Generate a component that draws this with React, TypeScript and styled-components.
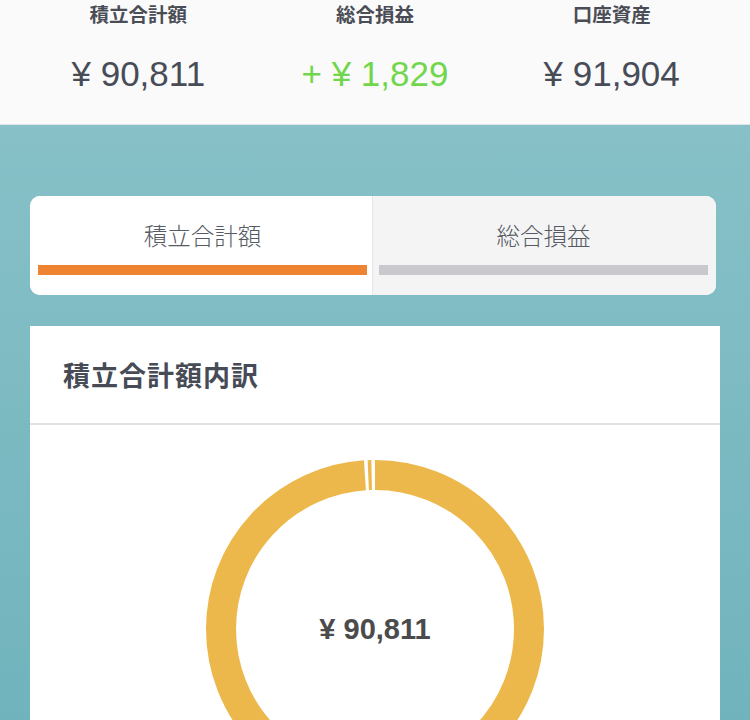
import React from 'react';
import styled, { createGlobalStyle } from 'styled-components';

const GlobalStyle = createGlobalStyle`
  body {
    margin: 0;
    font-family: "Liberation Sans", "Noto Sans CJK JP", sans-serif;
  }
`;

const Page = styled.div`
  min-height: 720px;
  display: flex;
  flex-direction: column;
  background: linear-gradient(180deg, #8cc3ca 0%, #6eb2bb 100%);
`;

const Summary = styled.div`
  background: #fafafa;
  border-bottom: 1px solid #dfe6e8;
  height: 125px;
  padding: 0 20px;
  display: grid;
  grid-template-columns: repeat(3, 1fr);
  box-sizing: border-box;
`;

const SummaryItem = styled.div`
  display: flex;
  flex-direction: column;
  align-items: center;
`;

const SummaryLabel = styled.div`
  font-family: "Noto Sans CJK JP", sans-serif;
  font-size: 19.5px;
  font-weight: 700;
  color: #4a4d55;
  line-height: 20px;
  margin-top: 4px;
`;

const SummaryValue = styled.div<{ $positive?: boolean }>`
  font-family: "Liberation Sans", "Noto Sans CJK JP", sans-serif;
  font-size: 35px;
  color: ${(p) => (p.$positive ? '#72d64c' : '#474c57')};
  margin-top: 30px;
  line-height: 40px;
`;

const Body = styled.div`
  padding: 71px 30px 0 30px;
  display: flex;
  flex-direction: column;
`;

const Tabs = styled.div`
  display: flex;
  width: 686px;
  height: 99px;
  border-radius: 10px;
  overflow: hidden;
  background: #fff;
`;

const Tab = styled.div<{ $active?: boolean }>`
  flex: 1;
  display: flex;
  flex-direction: column;
  align-items: center;
  padding: ${(p) => (p.$active ? '8px 5px 0 8px' : '8px 8px 0 6px')};
  background: ${(p) => (p.$active ? '#ffffff' : '#f4f4f4')};
  border-left: ${(p) => (p.$active ? 'none' : '1px solid #e6e6e6')};
`;

const TabText = styled.div`
  font-family: "Noto Sans CJK JP", sans-serif;
  font-size: 23.5px;
  font-weight: 300;
  color: #555a63;
  line-height: 48px;
  margin-top: 7px;
`;

const TabBar = styled.div<{ $active?: boolean }>`
  align-self: stretch;
  height: 10px;
  margin-top: 6px;
  background: ${(p) => (p.$active ? '#ee8432' : '#c9c9cd')};
`;

const Card = styled.div`
  margin-top: 31px;
  width: 690px;
  background: #fff;
  display: flex;
  flex-direction: column;
`;

const CardHeader = styled.div`
  height: 97px;
  padding-left: 33px;
  display: flex;
  align-items: center;
  border-bottom: 2px solid #e2e2e2;
  font-family: "Noto Sans CJK JP", sans-serif;
  font-size: 27px;
  font-weight: 700;
  letter-spacing: 1px;
  color: #464b56;
`;

const ChartArea = styled.div`
  display: flex;
  justify-content: center;
  padding-top: 35px;
`;

const Donut = styled.div`
  position: relative;
  width: 338px;
  height: 338px;
`;

const DonutLabel = styled.div`
  position: absolute;
  inset: 0;
  display: flex;
  align-items: center;
  justify-content: center;
  font-family: "Liberation Sans", sans-serif;
  font-size: 29px;
  font-weight: 700;
  color: #4b4b4d;
`;

const R = 154;
const C = 2 * Math.PI * R;

function Ring() {
  const big = { start: -1, len: C - 9.5 };
  const small = { start: C - 7.2, len: 3.4 };
  return (
    <svg width={338} height={338} viewBox="0 0 338 338">
      <g transform="rotate(-90 169 169)">
        {[big, small].map((s, i) => (
          <circle
            key={i}
            cx={169}
            cy={169}
            r={R}
            fill="none"
            stroke="#edb84b"
            strokeWidth={30}
            strokeDasharray={`${s.len} ${C}`}
            strokeDashoffset={-s.start}
          />
        ))}
      </g>
    </svg>
  );
}

export default function App() {
  return (
    <Page>
      <GlobalStyle />
      <Summary>
        <SummaryItem>
          <SummaryLabel>積立合計額</SummaryLabel>
          <SummaryValue>¥ 90,811</SummaryValue>
        </SummaryItem>
        <SummaryItem>
          <SummaryLabel>総合損益</SummaryLabel>
          <SummaryValue $positive>+ ¥ 1,829</SummaryValue>
        </SummaryItem>
        <SummaryItem>
          <SummaryLabel>口座資産</SummaryLabel>
          <SummaryValue>¥ 91,904</SummaryValue>
        </SummaryItem>
      </Summary>
      <Body>
        <Tabs>
          <Tab $active>
            <TabText>積立合計額</TabText>
            <TabBar $active />
          </Tab>
          <Tab>
            <TabText>総合損益</TabText>
            <TabBar />
          </Tab>
        </Tabs>
        <Card>
          <CardHeader>積立合計額内訳</CardHeader>
          <ChartArea>
            <Donut>
              <Ring />
              <DonutLabel>¥ 90,811</DonutLabel>
            </Donut>
          </ChartArea>
        </Card>
      </Body>
    </Page>
  );
}
